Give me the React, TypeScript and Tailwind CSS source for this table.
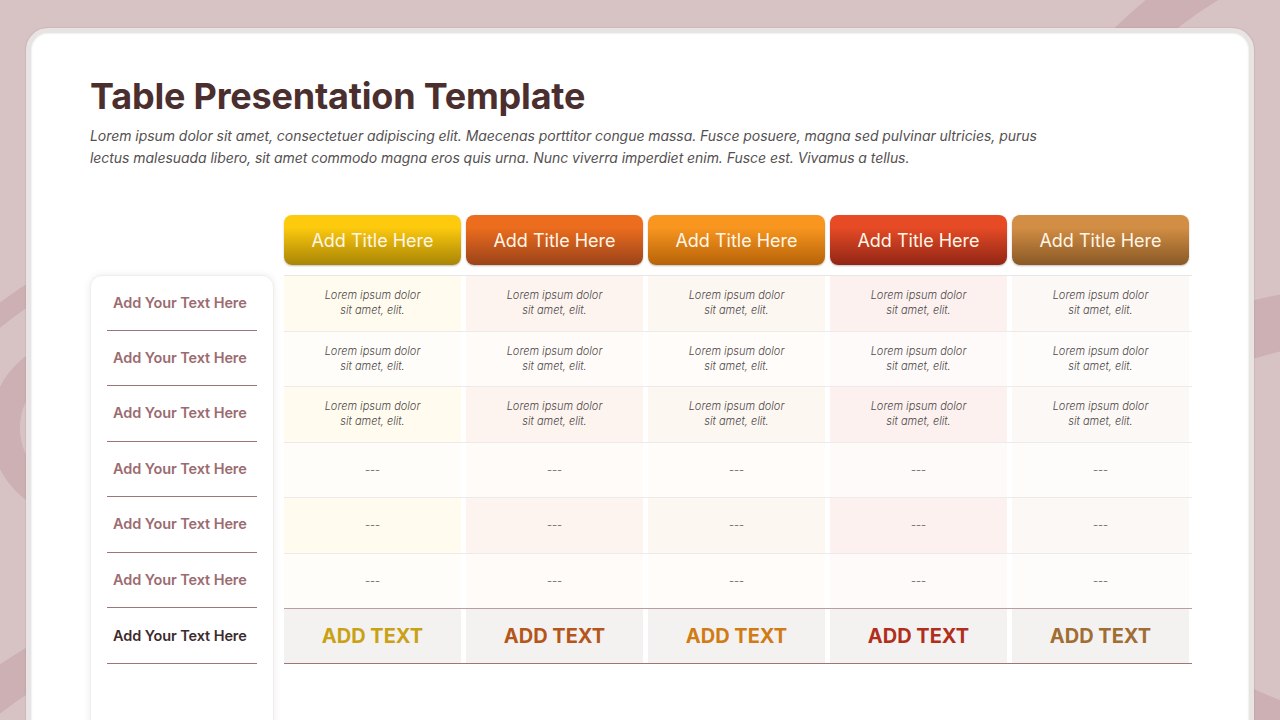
import React from "react";

const headers = [
  { from: "from-[#fdca0e]", to: "to-[#a98506]" },
  { from: "from-[#ec6d1d]", to: "to-[#9c4319]" },
  { from: "from-[#f8961f]", to: "to-[#b76308]" },
  { from: "from-[#e64b25]", to: "to-[#922616]" },
  { from: "from-[#d28e44]", to: "to-[#8a5926]" },
];

const oddBg = ["bg-[#fffcef]", "bg-[#fdf4f0]", "bg-[#fdf7f2]", "bg-[#fcf1ef]", "bg-[#fcf8f5]"];
const evenBg = ["bg-[#fffdf9]", "bg-[#fffbf9]", "bg-[#fffcf9]", "bg-[#fefaf9]", "bg-[#fefcfa]"];
const addColors = ["text-[#c9a114]", "text-[#b4561b]", "text-[#d07b14]", "text-[#b02f1c]", "text-[#a06d33]"];

const font = { fontFamily: "Inter, 'Noto Sans', sans-serif" };

function Background() {
  return (
    <svg className="absolute inset-0" width="1280" height="720" viewBox="0 0 1280 720">
      <circle cx="1420" cy="335" r="412" fill="none" stroke="#ccb0b3" strokeWidth="42" />
      <circle cx="1350" cy="668" r="352" fill="none" stroke="#ccb0b3" strokeWidth="56" />
      <circle cx="80" cy="428" r="75" fill="none" stroke="#ccb0b3" strokeWidth="30" />
      <circle cx="300" cy="705" r="492" fill="none" stroke="#ccb0b3" strokeWidth="20" />
      <circle cx="300" cy="1105" r="513" fill="none" stroke="#ccb0b3" strokeWidth="40" />
    </svg>
  );
}

export default function App() {
  const rows = [0, 1, 2, 3, 4, 5];
  return (
    <div className="relative w-[1280px] h-[720px] overflow-hidden bg-[#d8c3c4]" style={font}>
      <Background />
      <div className="absolute left-[26px] top-[28px] w-[1228px] h-[720px] rounded-[22px] border-[5px] border-[#e9e4e4] bg-white shadow-[0_0_2px_rgba(120,90,90,0.35),inset_0_0_2px_rgba(0,0,0,0.18)]">
        <div className="pl-[59px] pt-[41px]">
          <h1 className="text-[36px] leading-[44px] font-bold text-[#4b2f2f] tracking-[-0.2px]">
            Table Presentation Template
          </h1>
          <p className="mt-[7px] text-[14px] leading-[22px] italic text-[#555050] tracking-[-0.05px]">
            Lorem ipsum dolor sit amet, consectetuer adipiscing elit. Maecenas porttitor congue massa. Fusce posuere, magna sed pulvinar ultricies, purus
            <br />
            lectus malesuada libero, sit amet commodo magna eros quis urna. Nunc viverra imperdiet enim. Fusce est. Vivamus a tellus.
          </p>

          <div className="mt-[46px] flex gap-[10px]">
            {/* left labels */}
            <div className="w-[184px] mt-[60px] h-[460px] rounded-t-[12px] bg-white border border-[#f1eded] shadow-[0_0_6px_rgba(120,90,90,0.12)] px-[16px]">
              {[0, 1, 2, 3, 4, 5, 6].map((i) => (
                <div
                  key={i}
                  className={`flex items-center pl-[6px] border-b border-[#9d7777] text-[14.5px] font-semibold tracking-[-0.1px] ${
                    i === 6 ? "text-[#3d2b2c] pt-[2px]" : "text-[#9b6b70]"
                  } ${i === 0 ? "h-[54.5px]" : "h-[55.5px]"}`}
                >
                  Add Your Text Here
                </div>
              ))}
            </div>

            {/* table */}
            <div className="w-[908px]">
              <div className="flex gap-[5px] h-[50px]">
                {headers.map((h, i) => (
                  <div
                    key={i}
                    className={`w-[177px] h-[50px] rounded-[8px] bg-linear-to-b ${h.from} from-25% ${h.to} flex items-center justify-center text-[18px] text-[#fff6e8] shadow-[0_1px_2px_rgba(0,0,0,0.25)]`}
                  >
                    Add Title Here
                  </div>
                ))}
              </div>
              <div className="mt-[10px] border-t-[1.5px] border-[#ebe6e6]">
                {rows.map((r) => (
                  <div
                    key={r}
                    className={`h-[55.5px] flex gap-[5px] border-b-[1.5px] ${
                      r === 5 ? "border-[#b89e9e]" : "border-[#eeeaea]"
                    }`}
                  >
                    {headers.map((_, c) => (
                      <div
                        key={c}
                        className={`w-[177px] h-full flex items-center justify-center text-center ${
                          r % 2 === 0 ? oddBg[c] : evenBg[c]
                        }`}
                      >
                        {r < 3 ? (
                          <span className="text-[11px] leading-[15px] italic font-light text-[#4f4a4a]">
                            Lorem ipsum dolor
                            <br />
                            sit amet, elit.
                          </span>
                        ) : (
                          <span className="text-[11px] text-[#7a7474]">---</span>
                        )}
                      </div>
                    ))}
                  </div>
                ))}
                <div className="h-[55px] flex gap-[5px] border-b-[1.5px] border-[#9d7777]">
                  {headers.map((_, c) => (
                    <div
                      key={c}
                      className={`w-[177px] h-full bg-[#f4f2f1] flex items-center justify-center text-[20px] font-bold ${addColors[c]}`}
                    >
                      ADD TEXT
                    </div>
                  ))}
                </div>
              </div>
            </div>
          </div>
        </div>
      </div>
    </div>
  );
}
